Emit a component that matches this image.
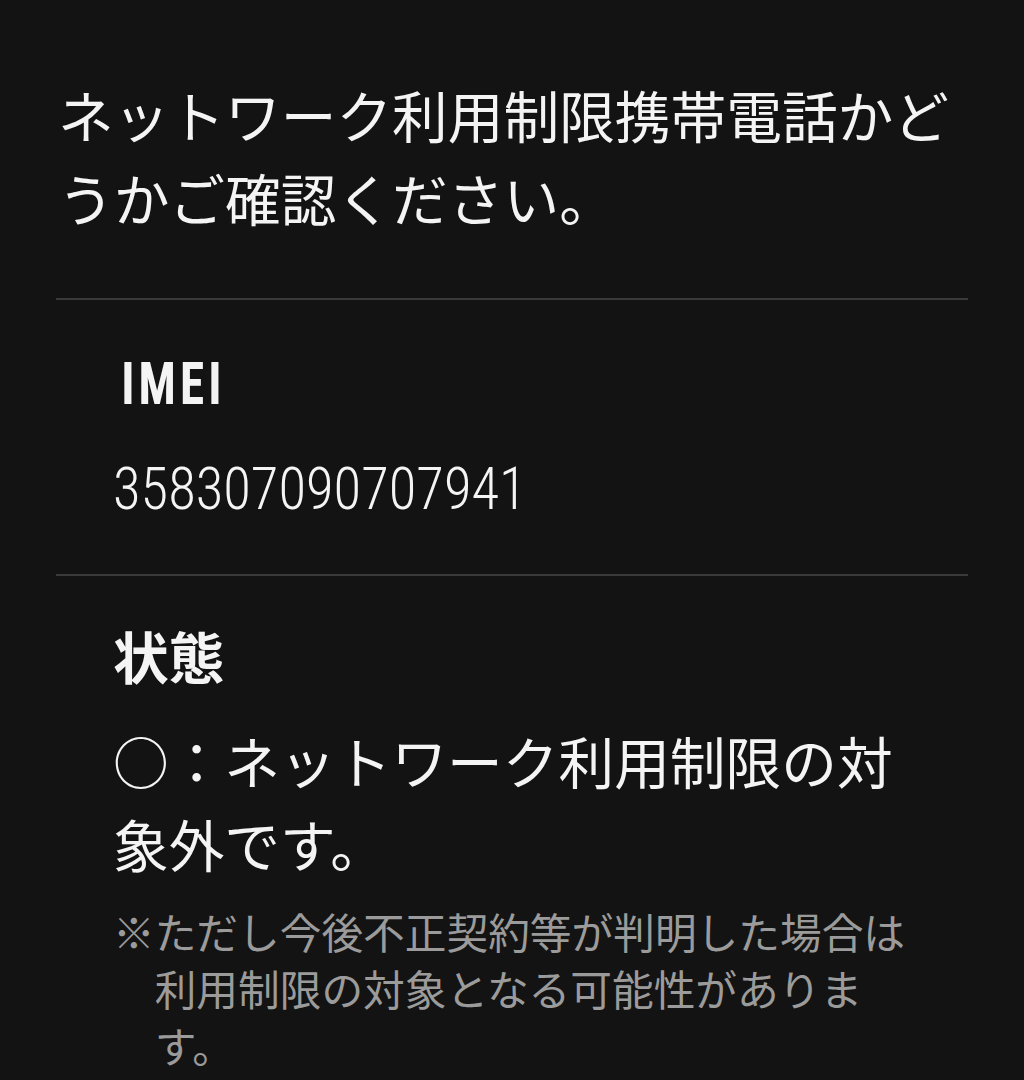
export default function App() {
  const jp = { fontFamily: '"Noto Sans CJK JP", "Noto Sans", sans-serif' };
  const narrow = {
    fontFamily: '"Liberation Sans Narrow", "Roboto Condensed", "DejaVu Sans Condensed", sans-serif',
  };
  return (
    <div className="min-h-[1080px] w-full bg-[#131313] px-[56px] text-[#f4f4f4]" style={jp}>
      <h1 className="pt-[72px] pl-[2px] pr-[2px] text-[55.7px] font-normal leading-[83px]">
        ネットワーク利用制限携帯電話かどうかご確認ください。
      </h1>
      <div className="mt-[60px] h-[2px] bg-[#3a3a3a]" />
      <section className="pl-[57px] pr-[58px] pt-[44px] pb-[45px]">
        <div className="text-[60px] font-bold leading-[80px]" style={narrow}>
          <span className="inline-block origin-left scale-x-[0.82] pl-[10px] tracking-[5px]">IMEI</span>
        </div>
        <div className="mt-[25px] text-[60px] font-light leading-[80px]" style={narrow}>
          <span className="inline-block origin-left scale-x-[0.945]">358307090707941</span>
        </div>
      </section>
      <div className="h-[2px] bg-[#3a3a3a]" />
      <section className="pl-[57px] pr-[58px] pt-[37px]">
        <div className="text-[55.7px] font-bold leading-[83px]">状態</div>
        <p className="mt-[22px] text-[55.7px] leading-[83px]">○：ネットワーク利用制限の対象外です。</p>
        <p className="mt-[19px] pl-[1em] -indent-[1em] text-[41.7px] leading-[57px] text-[#9b9b9b]">
          ※ただし今後不正契約等が判明した場合は利用制限の対象となる可能性があります。
        </p>
      </section>
    </div>
  );
}
